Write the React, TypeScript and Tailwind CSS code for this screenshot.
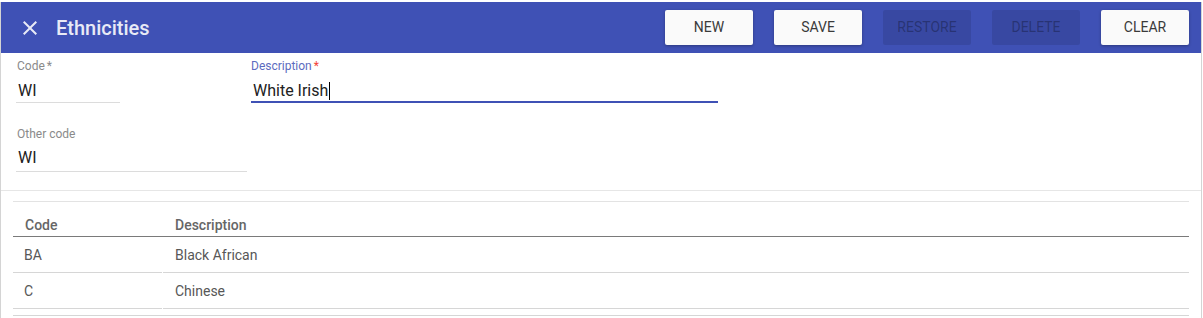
import React from "react";

const Btn = ({ label, disabled }: { label: string; disabled?: boolean }) => (
  <div
    className={
      disabled
        ? "w-[88px] h-[35px] rounded-[2px] bg-black/10 text-black/30 flex items-center justify-center text-[14px] uppercase"
        : "w-[88px] h-[35px] rounded-[2px] bg-[#fafafa] text-[#3a3a3a] flex items-center justify-center text-[14px] uppercase shadow-[0_1px_3px_rgba(0,0,0,0.3)]"
    }
  >
    {label}
  </div>
);

export default function App() {
  return (
    <div
      className="w-[1203px] h-[318px] bg-white pt-[2px] overflow-hidden"
      style={{ fontFamily: "Roboto, 'Liberation Sans', sans-serif" }}
    >
      <div className="w-[1202px] h-[316px] border-x border-[#d4d4d4]">
        {/* header */}
        <div className="flex items-center h-[51px] bg-[#3f51b5] pl-[17px] pr-[12px]">
          <svg width="24" height="24" viewBox="0 0 24 24" className="text-[#e8eaf6]">
            <path
              fill="currentColor"
              d="M19 6.41L17.59 5 12 10.59 6.41 5 5 6.41 10.59 12 5 17.59 6.41 19 12 13.41 17.59 19 19 17.59 13.41 12z"
            />
          </svg>
          <div className="ml-[14px] text-[20px] font-medium text-[#e8eaf6] leading-[24px]">Ethnicities</div>
          <div className="ml-auto flex gap-[21px]">
            <Btn label="New" />
            <Btn label="Save" />
            <Btn label="Restore" disabled />
            <Btn label="Delete" disabled />
            <Btn label="Clear" />
          </div>
        </div>

        {/* form */}
        <div className="pt-[6px] pl-[15px]">
          <div className="flex">
            <div className="w-[104px] border-b border-[#dcdcdc]">
              <div className="text-[12px] leading-[14px] text-[#8a8a8a] pl-[1px]">
                Code<span className="ml-[2px]">*</span>
              </div>
              <div className="mt-[8px] text-[16px] leading-[20px] text-[#212121] pl-[2px] pb-[1px]">WI</div>
            </div>
            <div className="ml-[131px] w-[467px] border-b-2 border-[#3f51b5]">
              <div className="text-[12px] leading-[14px] text-[#5c6bc0]">
                Description<span className="ml-[2px] text-[#f44336]">*</span>
              </div>
              <div className="mt-[8px] text-[16px] leading-[20px] text-[#212121] pl-[2px] pb-[0px] flex items-center">
                White Irish
                <span className="inline-block w-px h-[18px] bg-black ml-[1px]" />
              </div>
            </div>
          </div>
          <div className="mt-[24px] w-[231px] border-b border-[#dcdcdc]">
            <div className="text-[12px] leading-[14px] text-[#8a8a8a] pl-[1px]">Other code</div>
            <div className="mt-[7px] text-[16px] leading-[20px] text-[#212121] pl-[2px] pb-[3px]">WI</div>
          </div>
        </div>

        {/* separator */}
        <div className="mt-[18px] border-t border-[#e6e6e6]" />

        {/* table */}
        <div className="mt-[10px] mx-[12px] text-[14px]">
          <div className="flex h-[36px] border-t border-[#e3e3e3] border-b border-b-[#7a7a7a] items-end pb-[1px] font-medium text-[#666666] leading-[20px]">
            <div className="w-[150px] pl-[12px]">Code</div>
            <div className="pl-[12px]">Description</div>
          </div>
          {[
            ["BA", "Black African"],
            ["C", "Chinese"],
          ].map(([c, d]) => (
            <div key={c} className="flex h-[36px] text-[#575757] leading-[20px]">
              <div className="w-[149px] mr-[1px] pl-[11px] flex items-center border-b border-[#d6d6d6]">{c}</div>
              <div className="flex-1 pl-[12px] flex items-center border-b border-[#d6d6d6]">{d}</div>
            </div>
          ))}
          <div className="mt-[6px] border-t border-[#d6d6d6]" />
        </div>
      </div>
    </div>
  );
}
